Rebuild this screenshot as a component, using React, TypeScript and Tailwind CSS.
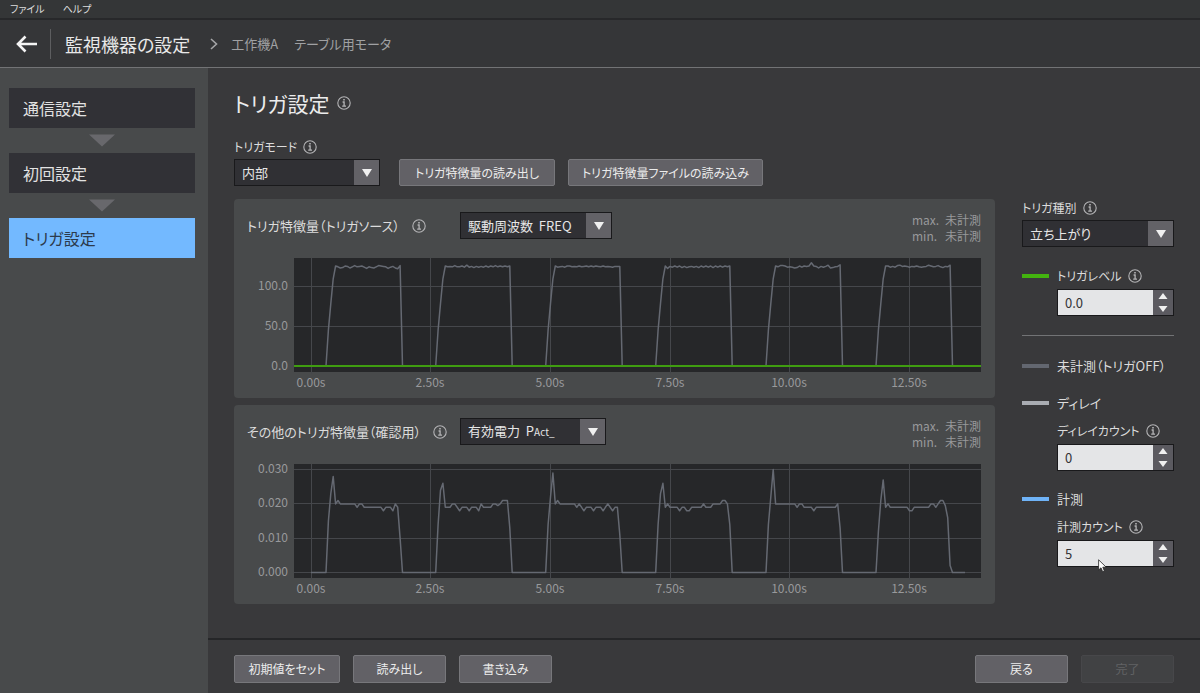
import React, { JSX } from "react";

import clsx from "clsx";

const STEPS = ["通信設定", "初回設定", "トリガ設定"];

// seconds shown on the x axis, with their place across the plot
const X_TICKS = [
	{ label: "0.00s", x: 17 },
	{ label: "2.50s", x: 136 },
	{ label: "5.00s", x: 256 },
	{ label: "7.50s", x: 376 },
	{ label: "10.00s", x: 495 },
	{ label: "12.50s", x: 615 },
];

const PLOT_WIDTH = 687;
const PLOT_HEIGHT = 114;
const SAMPLE = 2.39;
const CYCLE_STARTS = [32, 141.7, 251.7, 361.7, 472, 582];

const RISE = [0, 45, 78, 109, 125];

const FREQ_CYCLES = [
	[124, 122.5, 123, 125, 124.5, 122.5, 124, 125.5, 124, 124.5, 125, 123.5, 122, 124, 123, 122.5, 124, 125.5, 125, 124.5, 124, 122, 123.5, 124.5, 122.5, 121.5, 125.5],
	[124, 124.5, 124, 125.5, 124, 124, 125, 123.5, 126, 123.5, 124.5, 123, 124.5, 123.5, 124.5, 123.5, 125, 123.5, 125, 124, 125.5, 124, 125, 124, 125, 124, 125],
	[123.5, 124, 124.5, 123.5, 125, 125, 124, 124.5, 124, 125, 124, 124.5, 125, 124, 125, 124, 125, 124.5, 124, 125, 124, 124.5, 124, 123.5, 124.5, 124.5, 124.5],
	[122, 124.5, 123.5, 125, 123.5, 125, 123, 124.5, 123, 124, 124.5, 123.5, 124.5, 123, 125, 123.5, 125, 123.5, 125, 123, 125, 123.5, 125, 123.5, 125, 124, 125],
	[124, 125.5, 125.5, 125, 123.5, 124, 123.5, 122.5, 123, 125, 123.5, 125, 124.5, 125, 129, 125, 124.5, 122.5, 124.5, 123.5, 124.5, 126, 122.5, 123, 124, 124.5, 126.5],
	[125, 123.5, 124.5, 123.5, 125.5, 126, 124.5, 125, 124.5, 123.5, 124.5, 124, 125, 124, 123.5, 124, 124.5, 126, 125, 124, 124.5, 125.5, 124, 123, 124.5, 124, 126],
];

const POWER_CYCLES = [
	[0, 15, 23, 28, 20, 21, 20, 20, 20, 20, 20, 20, 20, 19, 20, 20, 19, 19, 19, 19, 19, 19, 19, 19, 18, 19, 19, 19, 18, 20, 19, 10, 0],
	[0, 14, 24, 26, 19, 19, 19, 20, 20, 19, 18, 19, 19, 19, 18, 19, 19, 19, 18, 20, 19, 19, 19, 19, 20, 20, 19.5, 20, 21, 21, 21, 13, 0],
	[0, 14, 22, 29, 20, 21, 20, 20, 20, 20, 20, 20, 20, 19, 20, 19, 18, 19, 19, 19, 18, 19, 19, 19, 18, 19, 20, 19, 18, 19, 19, 11, 0],
	[0, 14, 23, 26, 19, 20, 19, 19, 19, 19, 18, 19, 19, 18, 18, 19, 19, 19, 19, 19, 20, 19, 19, 19, 20, 20, 20, 20, 21, 21, 20, 14, 0],
	[0, 14, 22, 30, 20, 20, 20, 20, 20, 20, 20, 20, 20, 19, 20, 20, 19, 19, 19, 19, 18, 19, 19, 19, 19, 19, 19, 19, 19, 19, 20, 13, 0],
	[0, 12, 21, 27, 19, 20, 19, 19, 19, 19, 19, 19, 19, 19, 18, 18, 19, 19, 19, 19, 19, 19, 19, 20, 20, 19, 20, 21, 21, 19.5, 16, 2, 0],
];

const buildTrace = (cycles: number[][], toY: (value: number) => number): string => {
	const points = [`17,${toY(0)}`];
	cycles.forEach((cycle, i) => {
		cycle.forEach((value, j) => {
			points.push(`${(CYCLE_STARTS[i] + j * SAMPLE).toFixed(1)},${toY(value).toFixed(1)}`);
		});
	});
	points.push(`671,${toY(0)}`);
	return points.join(" ");
};

const FREQ_TRACE = buildTrace(
	FREQ_CYCLES.map((plateau) => [...RISE, ...plateau, 0]),
	(value) => 108 - value * 0.8
);
const POWER_TRACE = buildTrace(POWER_CYCLES, (value) => 108.5 - value * 3.43);

const InfoIcon: React.FC<{ className?: string }> = ({ className }): JSX.Element => (
	<svg viewBox="0 0 14 14" fill="none" stroke="currentColor" className={clsx("size-[14px] shrink-0 text-[#b4b4b6]", className)} aria-hidden="true">
		<circle cx="7" cy="7" r="6.2" strokeWidth="1.1" />
		<path d="M5.6 6H7.1V10M5.2 10.2H9" strokeWidth="1.3" />
		<path d="M6.2 3.8H7.8" strokeWidth="1.5" />
	</svg>
);

interface ISelectProps {
	label: string;
	id: string;
	options: string[];
	display?: React.ReactNode;
	className?: string;
}

const Select: React.FC<ISelectProps> = ({ label, id, options, display, className }): JSX.Element => (
	<div className={clsx("relative flex h-[27px] border border-[#19191b] bg-[#303034]", className)}>
		<select
			id={id}
			aria-label={label}
			className={clsx("w-full appearance-none pl-[7px] pr-7 text-[13px] outline-none", display ? "text-transparent" : "text-[#e6e6e6]")}
		>
			{options.map((option) => (
				<option key={option}>{option}</option>
			))}
		</select>
		{display && (
			<span className="pointer-events-none absolute inset-y-0 left-[7px] flex items-center whitespace-pre text-[#e6e6e6]" aria-hidden="true">
				{display}
			</span>
		)}
		<span className="pointer-events-none absolute inset-y-0 right-0 flex w-[25px] items-center justify-center bg-[#636267]">
			<svg viewBox="0 0 10 8" className="h-2 w-[10px] fill-[#f0f0f0]">
				<path d="M0 0H10L5 8Z" />
			</svg>
		</span>
	</div>
);

interface INumberFieldProps {
	id: string;
	label: string;
	value: string;
	children?: React.ReactNode;
}

const NumberField: React.FC<INumberFieldProps> = ({ id, label, value, children }): JSX.Element => (
	<div className="pl-[35px]">
		<label htmlFor={id} className="flex items-center gap-[6px] text-xs leading-[18px] whitespace-nowrap">
			{label}
			<InfoIcon />
		</label>
		<div className="relative mt-1 flex h-[27px] border border-[#19191b]">
			<input id={id} type="text" inputMode="decimal" defaultValue={value} className="w-full min-w-0 flex-1 bg-[#e4e5e7] pl-[7px] text-[#333336] outline-none" />
			<div className="flex w-[20px] flex-col bg-[#5b5a60]">
				<button type="button" aria-label="増やす" className="flex flex-1 items-center justify-center">
					<svg viewBox="0 0 10 6" className="h-[6px] w-[10px] fill-[#f0f0f0]">
						<path d="M0.5 6H9.5L5 0Z" />
					</svg>
				</button>
				<button type="button" aria-label="減らす" className="flex flex-1 items-center justify-center">
					<svg viewBox="0 0 10 6" className="h-[6px] w-[10px] fill-[#f0f0f0]">
						<path d="M0.5 0H9.5L5 6Z" />
					</svg>
				</button>
			</div>
			{children}
		</div>
	</div>
);

const Button: React.FC<React.ComponentProps<"button">> = ({ className, ...props }): JSX.Element => (
	<button
		type="button"
		className={clsx(
			"rounded-xs border border-[#77777b] bg-[#626166] text-xs whitespace-nowrap text-[#ececec] disabled:border-[#47474a] disabled:bg-[#414244] disabled:text-[#626365]",
			className
		)}
		{...props}
	/>
);

interface IChartProps {
	title: string;
	select: React.ReactNode;
	yTicks: { label: string; y: number }[];
	trace: string;
	level?: number;
}

const ChartPanel: React.FC<IChartProps> = ({ title, select, yTicks, trace, level }): JSX.Element => (
	<section className="rounded-sm bg-[#484a4b] pt-[13px] pr-[14px] pl-[13px] pb-[26px]">
		<div className="flex h-8 items-start">
			<div className="flex h-[27px] w-[213px] items-center gap-3 whitespace-nowrap">
				{title}
				<InfoIcon />
			</div>
			{select}
			<dl className="ml-auto grid grid-cols-[33px_auto] text-xs leading-4 text-[#98999b]">
				<dt>max.</dt>
				<dd>未計測</dd>
				<dt>min.</dt>
				<dd>未計測</dd>
			</dl>
		</div>
		<div className="mt-[14px] pl-[47px]">
			<svg className="block h-[114px] w-full overflow-visible" role="img" aria-label={title}>
				<rect width="100%" height={PLOT_HEIGHT} fill="#262729" />
				<svg width="100%" height={PLOT_HEIGHT} viewBox={`0 0 ${PLOT_WIDTH} ${PLOT_HEIGHT}`} preserveAspectRatio="none" overflow="visible">
					{X_TICKS.map(({ label, x }) => (
						<path key={label} d={`M${x + 0.5} 0V116`} stroke="#45474b" vectorEffect="non-scaling-stroke" />
					))}
					{yTicks.map(({ label, y }) => (
						<path key={label} d={`M0 ${y + 0.5}H${PLOT_WIDTH}`} stroke="#45474b" vectorEffect="non-scaling-stroke" />
					))}
					<polyline points={trace} fill="none" stroke="#656972" strokeWidth="1.5" strokeLinejoin="round" vectorEffect="non-scaling-stroke" />
					{level !== undefined && <path d={`M0 ${level}H${PLOT_WIDTH}`} stroke="#3f9d10" strokeWidth="2" vectorEffect="non-scaling-stroke" />}
				</svg>
				<g fill="#98999b" fontSize="12">
					{X_TICKS.map(({ label, x }) => (
						<text key={label} x={`${(x / PLOT_WIDTH) * 100}%`} y="129" textAnchor="middle">
							{label}
						</text>
					))}
					{yTicks.map(({ label, y }) => (
						<text key={label} x="-6" y={y + 4} textAnchor="end">
							{label}
						</text>
					))}
				</g>
			</svg>
		</div>
	</section>
);

const Legend: React.FC<{ color: string; children: React.ReactNode }> = ({ color, children }): JSX.Element => (
	<div className="flex items-center gap-2 whitespace-nowrap">
		<span className={clsx("h-1 w-[27px] shrink-0", color)} />
		{children}
	</div>
);

export default function App(): JSX.Element {
	return (
		<div className="flex min-h-screen flex-col bg-[#39393b] font-['Noto_Sans_CJK_JP',sans-serif] text-[13px] leading-[18px] text-[#dcdcdc] [font-feature-settings:'palt']">
			<nav className="flex h-5 items-center gap-[18px] border-b-2 border-[#27282a] bg-[#343637] px-[10px] text-[10px]">
				<button type="button">ファイル</button>
				<button type="button">ヘルプ</button>
			</nav>

			<header className="flex h-12 items-center border-b border-[#727375] bg-[#353638] pl-4">
				<button type="button" aria-label="前の画面">
					<svg viewBox="0 0 22 18" fill="none" stroke="#f4f4f4" strokeWidth="2.6" className="h-[18px] w-[22px]">
						<path d="M21 9H2M9.5 1.5L2 9L9.5 16.5" />
					</svg>
				</button>
				<span className="ml-3 h-[30px] w-px bg-[#5d5e60]" />
				<h1 className="ml-[14px] text-lg text-[#e8e8e8]">監視機器の設定</h1>
				<svg viewBox="0 0 8 12" fill="none" stroke="#a5a6a8" strokeWidth="1.6" className="ml-5 h-3 w-2">
					<path d="M1 1L6.5 6L1 11" />
				</svg>
				<p className="ml-[13px] flex gap-4 text-[#a0a1a3]">
					<span>工作機A</span>
					<span>テーブル用モータ</span>
				</p>
			</header>

			<div className="flex flex-1">
				<nav className="w-52 shrink-0 bg-[#484a4b] pt-5 pr-[13px] pl-[9px]">
					<ol>
						{STEPS.map((step, i) => (
							<li key={step}>
								{i > 0 && (
									<svg viewBox="0 0 26 12" className="mx-auto my-[6px] h-[13px] w-[26px] fill-[#68686c]">
										<path d="M0 0H26L13 12Z" />
									</svg>
								)}
								<button
									type="button"
									className={clsx("h-10 w-full pl-[14px] text-left text-base", i === 2 ? "bg-[#73b9ff] text-[#2c3a4c]" : "bg-[#313136] text-[#e2e2e2]")}
								>
									{step}
								</button>
							</li>
						))}
					</ol>
				</nav>

				<div className="flex min-w-0 flex-1 flex-col">
					<main className="flex-1 px-[26px] pt-[21px]">
						<h2 className="flex items-center gap-2 text-[21px] leading-7 text-[#ececec]">
							トリガ設定
							<InfoIcon />
						</h2>

						<div className="mt-[21px] flex items-end gap-[13px]">
							<div className="mr-[6px]">
								<label htmlFor="mode" className="mb-[3px] flex items-center gap-[6px] text-xs leading-[18px]">
									トリガモード
									<InfoIcon />
								</label>
								<Select id="mode" label="トリガモード" options={["内部", "外部"]} className="w-[146px]" />
							</div>
							<Button className="h-[27px] w-[156px]">トリガ特徴量の読み出し</Button>
							<Button className="h-[27px] w-[195px]">トリガ特徴量ファイルの読み込み</Button>
						</div>

						<div className="mt-[13px] flex gap-[27px]">
							<div className="flex min-w-0 flex-1 flex-col gap-[7px]">
								<ChartPanel
									title="トリガ特徴量（トリガソース）"
									select={<Select id="source" label="トリガソース" options={["駆動周波数  FREQ"]} display={"駆動周波数  FREQ"} className="w-[152px]" />}
									yTicks={[
										{ label: "100.0", y: 28 },
										{ label: "50.0", y: 68 },
										{ label: "0.0", y: 108 },
									]}
									trace={FREQ_TRACE}
									level={108}
								/>
								<ChartPanel
									title="その他のトリガ特徴量（確認用）"
									select={
										<Select
											id="other"
											label="その他のトリガ特徴量"
											options={["有効電力  PAct_"]}
											display={
												<span>
													{"有効電力  P"}
													<span className="text-[10px]">Act_</span>
												</span>
											}
											className="w-[146px]"
										/>
									}
									yTicks={[
										{ label: "0.030", y: 5 },
										{ label: "0.020", y: 39 },
										{ label: "0.010", y: 74 },
										{ label: "0.000", y: 108 },
									]}
									trace={POWER_TRACE}
								/>
							</div>

							<aside className="w-[152px] shrink-0">
								<label htmlFor="kind" className="mb-[3px] flex items-center gap-[6px] text-xs leading-[18px]">
									トリガ種別
									<InfoIcon />
								</label>
								<Select id="kind" label="トリガ種別" options={["立ち上がり", "立ち下がり"]} />

								<div className="relative mt-5 border-b border-[#727375] pb-[19px]">
									<span className="absolute top-[7px] left-0 h-1 w-[27px] bg-[#43b30f]" />
									<NumberField id="level" label="トリガレベル" value="0.0" />
								</div>

								<div className="mt-[21px] flex flex-col gap-[19px]">
									<Legend color="bg-[#636770]">未計測（トリガOFF）</Legend>
									<div className="flex flex-col gap-[10px]">
										<Legend color="bg-[#a9acb2]">ディレイ</Legend>
										<NumberField id="delay" label="ディレイカウント" value="0" />
									</div>
									<div className="flex flex-col gap-[10px]">
										<Legend color="bg-[#6fb3f7]">計測</Legend>
										<NumberField id="count" label="計測カウント" value="5">
											<svg viewBox="0 0 9 14" className="absolute top-[18px] left-[40px] h-[14px] w-[9px]" aria-hidden="true">
												<path d="M.6 .8V11L3 8.8L4.7 12.8L6.4 12L4.8 8.2H8.2Z" fill="#fff" stroke="#222" strokeWidth=".8" />
											</svg>
										</NumberField>
									</div>
								</div>
							</aside>
						</div>
					</main>

					<footer className="flex gap-[13px] border-t-2 border-[#252628] px-[26px] pt-[15px] pb-[10px]">
						<Button className="h-7 w-[106px]">初期値をセット</Button>
						<Button className="h-7 w-[93px]">読み出し</Button>
						<Button className="h-7 w-[93px]">書き込み</Button>
						<Button className="ml-auto h-7 w-[93px]">戻る</Button>
						<Button className="h-7 w-[93px]" disabled>
							完了
						</Button>
					</footer>
				</div>
			</div>
		</div>
	);
}
